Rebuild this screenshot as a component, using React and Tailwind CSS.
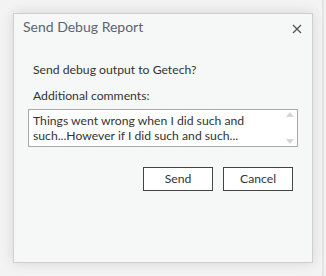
export default function App() {
  return (
    <div className="w-[326px] h-[276px] bg-[#f3f3f3] relative overflow-hidden" style={{ fontFamily: 'Lato, "Noto Sans", sans-serif' }}>
      <div className="absolute right-[2px] top-0 bottom-0 w-[2px] bg-[#e4e4e4]" />
      <div className="absolute left-[13px] top-[13px] w-[300px] h-[250px] bg-[#f6f8f7] border border-[#cfcfcf] shadow-[0_0_12px_rgba(0,0,0,0.12)] flex flex-col">
        <div className="flex items-center justify-between pl-[9px] pr-[10px] pb-[3px] h-[29px]">
          <span className="text-[14px] text-[#5b6470] leading-none">Send Debug Report</span>
          <svg width="10" height="10" viewBox="0 0 10 10" className="mt-[3px]">
            <path d="M1 1 L9 9 M9 1 L1 9" stroke="#555" strokeWidth="1.3" />
          </svg>
        </div>
        <div className="pl-[19px] pr-[14px] pt-[19px] flex flex-col">
          <div className="text-[12.2px] text-[#333] leading-[16px]">Send debug output to Getech?</div>
          <div className="text-[12.2px] text-[#333] leading-[16px] mt-[10px]">Additional comments:</div>
          <div className="mt-[5px] h-[38px] w-[270px] -ml-[5px] bg-white border border-[#a8a8a8] relative">
            <div className="pl-[4px] pt-[3px] pr-[20px] text-[12.2px] text-[#333] leading-[15px]">
              Things went wrong when I did such and such...However if I did such and such...
            </div>
            <svg className="absolute right-[3px] top-[2px]" width="8" height="5" viewBox="0 0 8 5">
              <path d="M0 5 L4 0 L8 5 Z" fill="#d6d6d6" />
            </svg>
            <svg className="absolute right-[3px] bottom-[2px]" width="8" height="5" viewBox="0 0 8 5">
              <path d="M0 0 L4 5 L8 0 Z" fill="#d6d6d6" />
            </svg>
          </div>
          <div className="flex justify-end gap-[10px] mt-[20px] pr-[5px]">
            <button className="w-[70px] h-[24px] bg-white border border-[#444] text-[12.2px] text-[#333] leading-none">Send</button>
            <button className="w-[70px] h-[24px] bg-white border border-[#444] text-[12.2px] text-[#333] leading-none">Cancel</button>
          </div>
        </div>
      </div>
    </div>
  );
}
